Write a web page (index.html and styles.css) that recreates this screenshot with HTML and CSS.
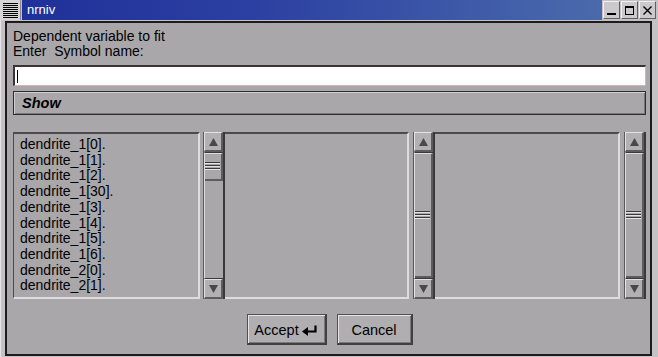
FILE: index.html
```html
<!DOCTYPE html>
<html>
<head>
    <title>nrniv</title>
    <link rel="stylesheet" href="styles.css">
</head>
<body>
    <div class="window">
        <div class="titlebar">
            <div class="menu-btn"><div class="menu-lines"></div></div>
            <div class="title">nrniv</div>
            <div class="wm-btns">
                <div class="wm-btn">
                    <svg width="11" height="11" viewBox="0 0 11 11"><rect x="1" y="8" width="9" height="2" fill="#000"/></svg>
                </div>
                <div class="wm-btn">
                    <svg width="11" height="11" viewBox="0 0 11 11"><rect x="1.5" y="1.5" width="8" height="8" fill="none" stroke="#000"/><rect x="1" y="1" width="9" height="2" fill="#000"/></svg>
                </div>
                <div class="wm-btn">
                    <svg width="11" height="11" viewBox="0 0 11 11"><path d="M1.5 1.5 L9.5 9.5 M9.5 1.5 L1.5 9.5" stroke="#000" stroke-width="1.4"/></svg>
                </div>
            </div>
        </div>

        <div class="frame">
            <div class="client">
                <div class="prompt">Dependent variable to fit<br>Enter&nbsp; Symbol name:</div>
                <div class="field"><span class="caret"></span></div>
                <div class="show-btn">Show</div>

                <div class="panes">
                    <div class="group g1">
                        <div class="pane">
                            <div class="item">dendrite_1[0].</div>
                            <div class="item">dendrite_1[1].</div>
                            <div class="item">dendrite_1[2].</div>
                            <div class="item">dendrite_1[30].</div>
                            <div class="item">dendrite_1[3].</div>
                            <div class="item">dendrite_1[4].</div>
                            <div class="item">dendrite_1[5].</div>
                            <div class="item">dendrite_1[6].</div>
                            <div class="item">dendrite_2[0].</div>
                            <div class="item">dendrite_2[1].</div>
                        </div>
                        <div class="scrollbar">
                            <div class="sb-btn">
                                <svg width="9" height="8" viewBox="0 0 9 8"><polygon points="4.5,0 9,8 0,8" fill="#4a484a"/></svg>
                            </div>
                            <div class="track">
                                <div class="thumb thumb-small"><div class="grip"></div></div>
                            </div>
                            <div class="sb-btn">
                                <svg width="9" height="8" viewBox="0 0 9 8"><polygon points="0,0 9,0 4.5,8" fill="#4a484a"/></svg>
                            </div>
                        </div>
                    </div>

                    <div class="group g2">
                        <div class="pane"></div>
                        <div class="scrollbar">
                            <div class="sb-btn">
                                <svg width="9" height="8" viewBox="0 0 9 8"><polygon points="4.5,0 9,8 0,8" fill="#4a484a"/></svg>
                            </div>
                            <div class="track">
                                <div class="thumb thumb-full"><div class="grip"></div></div>
                            </div>
                            <div class="sb-btn">
                                <svg width="9" height="8" viewBox="0 0 9 8"><polygon points="0,0 9,0 4.5,8" fill="#4a484a"/></svg>
                            </div>
                        </div>
                    </div>

                    <div class="group g3">
                        <div class="pane"></div>
                        <div class="scrollbar">
                            <div class="sb-btn">
                                <svg width="9" height="8" viewBox="0 0 9 8"><polygon points="4.5,0 9,8 0,8" fill="#4a484a"/></svg>
                            </div>
                            <div class="track">
                                <div class="thumb thumb-full"><div class="grip"></div></div>
                            </div>
                            <div class="sb-btn">
                                <svg width="9" height="8" viewBox="0 0 9 8"><polygon points="0,0 9,0 4.5,8" fill="#4a484a"/></svg>
                            </div>
                        </div>
                    </div>
                </div>

                <div class="actions">
                    <div class="button accept">Accept
                        <svg width="16" height="11" viewBox="0 0 16 11"><path d="M13.5 0.5 V6.5 H5" stroke="#000" stroke-width="2.2" fill="none"/><polygon points="0,6.5 6,2 6,11" fill="#000"/></svg>
                    </div>
                    <div class="button cancel">Cancel</div>
                </div>
            </div>
        </div>
    </div>
</body>
</html>
```

FILE: styles.css
```css
body {
    margin: 0;
    font-family: 'Liberation Sans', Arial, sans-serif;
    font-size: 14px;
    color: #000;
    background: #a9a7a9;
}

.window {
    width: 658px;
    height: 357px;
    display: flex;
    flex-direction: column;
    background: #c4c2c4;
}

/* title bar */
.titlebar {
    height: 21px;
    display: flex;
    background: #c4c2c4;
}
.menu-btn {
    width: 20px;
    height: 20px;
    background: #d6d4d6;
    border-right: 1px solid #8a888a;
    display: flex;
    align-items: center;
    justify-content: center;
}
.menu-lines {
    width: 15px;
    height: 15px;
    background: repeating-linear-gradient(to bottom, #000 0, #000 1px, transparent 1px, transparent 2px);
}
.title {
    flex: 1;
    margin-left: 1px;
    height: 20px;
    padding-left: 5px;
    line-height: 20px;
    font-size: 13px;
    color: #fff;
    background: linear-gradient(to right, #20309a 0%, #2c40a2 40%, #4a6aac 100%);
}
.wm-btns {
    display: flex;
    padding: 1px 2px 0 1px;
    gap: 1px;
}
.wm-btn {
    width: 15px;
    height: 16px;
    background: #cbc9cb;
    border-top: 1px solid #f0f0f0;
    border-left: 1px solid #f0f0f0;
    border-right: 1px solid #606060;
    border-bottom: 1px solid #606060;
    display: flex;
    align-items: center;
    justify-content: center;
}

/* window frame */
.frame {
    flex: 1;
    padding: 1px 6px 6px 5px;
    border-left: 1px solid #e6e4e6;
}
.client {
    height: 325px;
    border: 2px solid #1c1c1c;
    margin-left: -1px;
    background: #a9a7a9;
    padding: 6px 4px 0 6px;
}

.prompt {
    line-height: 15px;
    height: 30px;
}

.field {
    margin-top: 6px;
    height: 18px;
    background: #fff;
    border-top: 2px solid #3a3333;
    border-left: 2px solid #3a3333;
    border-right: 1px solid #d4b4b4;
    border-bottom: 1px solid #d4b4b4;
    display: flex;
    align-items: center;
    padding-left: 2px;
}
.caret {
    width: 1px;
    height: 13px;
    background: #000;
}

.show-btn {
    margin-top: 5px;
    height: 22px;
    line-height: 23px;
    border: 1px solid #2e2e2e;
    box-shadow: inset 1px 1px #cfcdcf, inset -1px -1px #7a787a;
    padding-left: 8px;
    font-style: italic;
    font-weight: bold;
    font-size: 14.5px;
}

/* panes */
.panes {
    margin-top: 17px;
    height: 167px;
    display: flex;
}
.group {
    display: flex;
    gap: 4px;
}
.g1 { width: 212px; gap: 3px; }
.g2 { width: 210px; }
.g3 { width: 211px; }

.pane {
    flex: 1;
    border-top: 2px solid #4c4a4c;
    border-left: 1px solid #4c4a4c;
    border-right: 2px solid #dedcde;
    border-bottom: 2px solid #dedcde;
    padding: 3px 0 0 6px;
    overflow: hidden;
}
.g2 .pane, .g3 .pane {
    border-left: none;
}
.item {
    line-height: 15.7px;
    white-space: nowrap;
}

.scrollbar {
    width: 19px;
    display: flex;
    flex-direction: column;
    border-left: 1px solid #5a585a;
    border-right: 2px solid #3a383a;
    background: #a9a7a9;
}
.sb-btn {
    height: 17px;
    background: #b2b0b2;
    border-top: 1px solid #e4e2e4;
    border-left: 1px solid #e4e2e4;
    border-right: 2px solid #5e5c5e;
    border-bottom: 2px solid #5e5c5e;
    display: flex;
    align-items: center;
    justify-content: center;
}
.track {
    flex: 1;
    border-top: 1px solid #3a383a;
    border-bottom: 1px solid #3a383a;
    border-left: 1px solid #dedcde;
    display: flex;
    flex-direction: column;
}
.thumb {
    background: #a9a7a9;
    border-top: 1px solid #dedcde;
    border-right: 2px solid #5e5c5e;
    border-bottom: 2px solid #5e5c5e;
    display: flex;
    align-items: center;
    justify-content: center;
}
.thumb-small { height: 25px; }
.thumb-full { flex: 1; }
.grip {
    width: 15px;
    height: 9px;
    margin-left: -1px;
    background: repeating-linear-gradient(to bottom, #3a383a 0, #3a383a 1px, #e4e2e4 1px, #e4e2e4 2px, #a9a7a9 2px, #a9a7a9 3px);
}

/* bottom buttons */
.actions {
    margin-top: 15px;
    display: flex;
    justify-content: center;
    gap: 10px;
}
.button {
    height: 26px;
    padding-top: 2px;
    border-top: 1px solid #505050;
    border-left: 1px solid #505050;
    border-right: 2px solid #404040;
    border-bottom: 2px solid #404040;
    box-shadow: inset 1px 1px #e6e4e6, inset -1px -1px #7a787a;
    background: #b0aeb0;
    display: flex;
    align-items: center;
    justify-content: center;
    gap: 3px;
    font-size: 14.5px;
}
.accept { width: 77px; }
.cancel { width: 73px; }
```
